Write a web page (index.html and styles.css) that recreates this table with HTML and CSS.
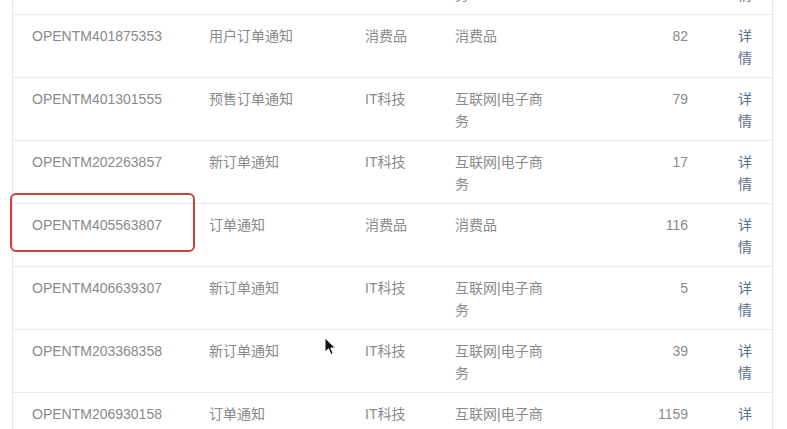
FILE: index.html
```html
<!DOCTYPE html>
<html lang="zh-CN">
<head>
<meta charset="utf-8">
<title>模板列表</title>
<link rel="stylesheet" href="styles.css">
</head>
<body>
<div class="table">
  <div class="row">
    <div class="c c1">OPENTM207940503</div>
    <div class="c c2">订单状态通知</div>
    <div class="c c3">IT科技</div>
    <div class="c c4">互联网|电子商务</div>
    <div class="c c5">64</div>
    <div class="c c6"><a class="link">详情</a></div>
  </div>
  <div class="row">
    <div class="c c1">OPENTM401875353</div>
    <div class="c c2">用户订单通知</div>
    <div class="c c3">消费品</div>
    <div class="c c4">消费品</div>
    <div class="c c5">82</div>
    <div class="c c6"><a class="link">详情</a></div>
  </div>
  <div class="row">
    <div class="c c1">OPENTM401301555</div>
    <div class="c c2">预售订单通知</div>
    <div class="c c3">IT科技</div>
    <div class="c c4">互联网|电子商务</div>
    <div class="c c5">79</div>
    <div class="c c6"><a class="link">详情</a></div>
  </div>
  <div class="row">
    <div class="c c1">OPENTM202263857</div>
    <div class="c c2">新订单通知</div>
    <div class="c c3">IT科技</div>
    <div class="c c4">互联网|电子商务</div>
    <div class="c c5">17</div>
    <div class="c c6"><a class="link">详情</a></div>
  </div>
  <div class="row highlighted">
    <div class="c c1">OPENTM405563807</div>
    <div class="c c2">订单通知</div>
    <div class="c c3">消费品</div>
    <div class="c c4">消费品</div>
    <div class="c c5">116</div>
    <div class="c c6"><a class="link">详情</a></div>
    <div class="mark"></div>
  </div>
  <div class="row">
    <div class="c c1">OPENTM406639307</div>
    <div class="c c2">新订单通知</div>
    <div class="c c3">IT科技</div>
    <div class="c c4">互联网|电子商务</div>
    <div class="c c5">5</div>
    <div class="c c6"><a class="link">详情</a></div>
  </div>
  <div class="row">
    <div class="c c1">OPENTM203368358</div>
    <div class="c c2">新订单通知</div>
    <div class="c c3">IT科技</div>
    <div class="c c4">互联网|电子商务</div>
    <div class="c c5">39</div>
    <div class="c c6"><a class="link">详情</a></div>
    <svg class="cursor" width="14" height="20" viewBox="0 0 14 20"><path d="M1 1 L1 15 L4.5 11.8 L7 17.5 L9.2 16.5 L6.8 11 L11.5 11 Z" fill="#111" stroke="#fff" stroke-width="1"/></svg>
  </div>
  <div class="row">
    <div class="c c1">OPENTM206930158</div>
    <div class="c c2">订单通知</div>
    <div class="c c3">IT科技</div>
    <div class="c c4">互联网|电子商务</div>
    <div class="c c5">1159</div>
    <div class="c c6"><a class="link">详情</a></div>
  </div>
</div>
</body>
</html>
```
FILE: styles.css
```css
html, body {
  margin: 0;
  padding: 0;
  background: #fff;
  overflow: hidden;
}
body {
  font-family: "Liberation Sans", "Noto Sans CJK SC", sans-serif;
  font-size: 14px;
  line-height: 22px;
  color: #8a8a8a;
}
.table {
  margin: -49px 0 0 12px;
  width: 759px;
  border-left: 1px solid #e8e8e8;
  border-right: 1px solid #e8e8e8;
}
.row {
  position: relative;
  display: grid;
  grid-template-columns: 196px 156px 90px 110px 143px 64px;
  height: 62px;
  border-top: 1px solid #ebebeb;
}
.c {
  padding-top: 10px;
}
.c1 { padding-left: 19px; }
.c4 { padding-right: 15px; }
.c5 { text-align: right; padding-right: 20px; }
.c6 { padding-left: 30px; padding-right: 20px; }
.link {
  color: #5d6e90;
  text-decoration: none;
}
.mark {
  position: absolute;
  left: -3px;
  top: -11px;
  width: 181px;
  height: 55px;
  border: 2px solid #cb433d;
  border-radius: 6px;
}
.cursor {
  position: absolute;
  left: 311px;
  top: 7px;
}
```
